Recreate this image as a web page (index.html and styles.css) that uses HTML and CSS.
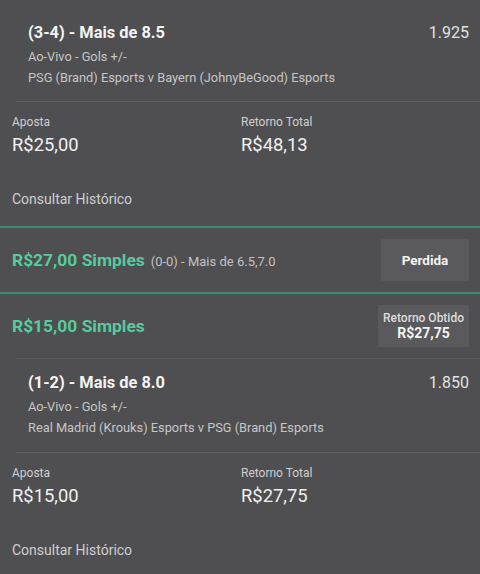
FILE: index.html
```html
<!DOCTYPE html>
<html lang="pt-BR">
<head>
<meta charset="utf-8">
<link rel="stylesheet" href="styles.css">
</head>
<body>
<div class="page">
  <section class="selection selection-first">
    <div class="sel-head">
      <div class="sel-title">(3-4) - Mais de 8.5</div>
      <div class="sel-odds">1.925</div>
    </div>
    <div class="sel-sub">Ao-Vivo - Gols +/-</div>
    <div class="sel-sub">PSG (Brand) Esports v Bayern (JohnyBeGood) Esports</div>
  </section>
  <section class="amounts">
    <div class="amount-col">
      <div class="amount-label">Aposta</div>
      <div class="amount-value">R$25,00</div>
    </div>
    <div class="amount-col">
      <div class="amount-label">Retorno Total</div>
      <div class="amount-value">R$48,13</div>
    </div>
  </section>
  <div class="history">Consultar Histórico</div>

  <div class="bet-row bet-row-lined">
    <div class="bet-summary">
      <span class="bet-stake">R$27,00 Simples</span>
      <span class="bet-desc">(0-0) - Mais de 6.5,7.0</span>
    </div>
    <div class="status-box status-lost">Perdida</div>
  </div>

  <div class="bet-row bet-row-lined">
    <div class="bet-summary">
      <span class="bet-stake">R$15,00 Simples</span>
    </div>
    <div class="status-box status-return">
      <span class="status-small">Retorno Obtido</span>
      <span class="status-big">R$27,75</span>
    </div>
  </div>

  <section class="selection selection-second">
    <div class="sel-head">
      <div class="sel-title">(1-2) - Mais de 8.0</div>
      <div class="sel-odds">1.850</div>
    </div>
    <div class="sel-sub">Ao-Vivo - Gols +/-</div>
    <div class="sel-sub">Real Madrid (Krouks) Esports v PSG (Brand) Esports</div>
  </section>
  <section class="amounts">
    <div class="amount-col">
      <div class="amount-label">Aposta</div>
      <div class="amount-value">R$15,00</div>
    </div>
    <div class="amount-col">
      <div class="amount-label">Retorno Total</div>
      <div class="amount-value">R$27,75</div>
    </div>
  </section>
  <div class="history">Consultar Histórico</div>
</div>
</body>
</html>
```

FILE: styles.css
```css
* { box-sizing: border-box; }
html, body {
  margin: 0;
  padding: 0;
  background: #4f4e50;
}
body {
  font-family: Roboto, "Noto Sans", "Liberation Sans", sans-serif;
  color: #f2f2f2;
  width: 480px;
  height: 574px;
  overflow: hidden;
}
.page {
  display: flex;
  flex-direction: column;
}
.selection {
  margin-left: 16px;
  padding: 23px 11px 13px 12px;
  border-bottom: 1px solid #5e5d60;
}
.selection-second {
  padding-top: 14px;
  padding-bottom: 14px;
  border-top: 1px solid #58575a;
}
.sel-head {
  display: flex;
  justify-content: space-between;
  align-items: center;
  height: 20px;
}
.sel-title {
  font-size: 16.4px;
  font-weight: 700;
  color: #f4f4f4;
  line-height: 20px;
}
.sel-odds {
  font-size: 16px;
  color: #e2e2e2;
  line-height: 20px;
}
.sel-sub {
  font-size: 12.8px;
  color: #c6c6c6;
  line-height: 21px;
}
.sel-head + .sel-sub { margin-top: 3px; }
.amounts {
  display: grid;
  grid-template-columns: 229px 1fr;
  padding: 12px 12px 0 12px;
}
.amount-label {
  font-size: 12px;
  line-height: 16px;
  color: #cfcfcf;
}
.amount-value {
  font-size: 18.4px;
  line-height: 24px;
  margin-top: 3px;
  color: #f0f0f0;
}
.history {
  font-size: 14px;
  line-height: 20px;
  color: #cfcfcf;
  padding: 32px 12px 17px;
}
.bet-row {
  display: flex;
  justify-content: space-between;
  align-items: center;
  padding: 11px 11px 11px 12px;
}
.bet-row-lined {
  border-top: 2px solid #3f8a72;
}
.bet-summary {
  display: flex;
  align-items: baseline;
  gap: 6px;
}
.bet-stake {
  font-size: 17.4px;
  font-weight: 700;
  color: #55cc9d;
}
.bet-desc {
  font-size: 13px;
  color: #c2c2c2;
}
.status-box {
  background: #5a595b;
  height: 42px;
  display: flex;
  flex-direction: column;
  align-items: center;
  justify-content: center;
  border-radius: 1px;
}
.status-lost {
  width: 88px;
  font-size: 13.5px;
  font-weight: 700;
  color: #f2f2f2;
}
.status-return {
  width: 91px;
}
.status-small {
  font-size: 12px;
  font-weight: 500;
  color: #dcdcdc;
  line-height: 14px;
}
.status-big {
  font-size: 14px;
  font-weight: 700;
  color: #f2f2f2;
  line-height: 17px;
}
```
